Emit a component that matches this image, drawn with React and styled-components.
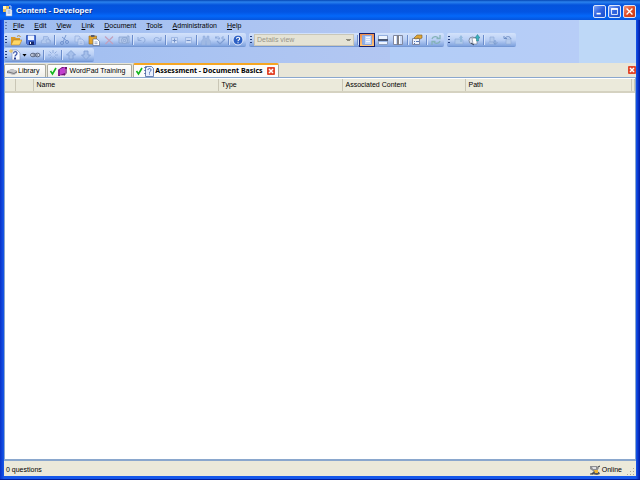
import React from 'react'
import styled, { createGlobalStyle, css } from 'styled-components'

const menus = ['File', 'Edit', 'View', 'Link', 'Document', 'Tools', 'Administration', 'Help']

export default function App() {
  return (
    <>
      <GlobalStyle />
      <Window>
        <TitleBar>
          <TitleIcon />
          <Title>Content - Developer</Title>
          <Caption aria-label="Minimize">
            <svg viewBox="0 0 13 13">
              <path d="M3 8h5v2H3z" fill="#fff" />
            </svg>
          </Caption>
          <Caption aria-label="Maximize">
            <svg viewBox="0 0 13 13">
              <path d="M3 3.5h7v6.5H3z" fill="none" stroke="#fff" />
              <path d="M2.5 2.5h8v2h-8z" fill="#fff" />
            </svg>
          </Caption>
          <Caption $close aria-label="Close">
            <svg viewBox="0 0 13 13">
              <path d="M3 3l7 7M10 3l-7 7" stroke="#fff" strokeWidth="1.6" />
            </svg>
          </Caption>
        </TitleBar>
        <Docks>
          <MenuBar>
            <Grip />
            {menus.map((name) => (
              <MenuItem key={name}>
                <u>{name[0]}</u>
                {name.slice(1)}
              </MenuItem>
            ))}
          </MenuBar>
          <ToolRow>
            <Band>
              <Grip $dark />
              <Tool icon="open" label="Open" />
              <Tool icon="save" label="Save" />
              <Tool icon="print" label="Print" disabled />
              <Divider />
              <Tool icon="cut" label="Cut" disabled />
              <Tool icon="copy" label="Copy" disabled />
              <Tool icon="paste" label="Paste" />
              <Tool icon="remove" label="Delete" disabled />
              <Tool icon="camera" label="Record" disabled />
              <Divider />
              <Tool icon="undo" label="Undo" disabled />
              <Tool icon="redo" label="Redo" disabled />
              <Divider />
              <Tool icon="plus" label="Expand" disabled narrow />
              <Tool icon="minus" label="Collapse" disabled narrow />
              <Divider />
              <Tool icon="find" label="Find" disabled />
              <Tool icon="spell" label="Spelling" disabled narrow />
              <Divider />
              <Tool icon="help" label="Help" />
            </Band>
            <Band>
              <Grip $dark />
              <ViewSelect aria-label="View" disabled>
                <option>Details view</option>
              </ViewSelect>
              <Divider $roomy />
              <Tool icon="single" label="Single pane" active />
              <Tool icon="rows" label="Split horizontally" />
              <Tool icon="columns" label="Split vertically" />
              <Divider $roomy />
              <Tool icon="properties" label="Properties" />
              <Divider $roomy />
              <Tool icon="refresh" label="Refresh" disabled />
            </Band>
            <Band>
              <Grip $dark />
              <Tool icon="checkIn" label="Check in" disabled />
              <Tool icon="checkInAll" label="Check in all" />
              <Divider $roomy />
              <Tool icon="checkOut" label="Check out" disabled />
              <Tool icon="undoCheckOut" label="Undo check out" disabled />
            </Band>
          </ToolRow>
          <ToolRow>
            <Band>
              <Grip $dark />
              <Tool icon="question" label="New question" narrow />
              <DropButton aria-label="Question types" />
              <Tool icon="link" label="Link" />
              <Divider />
              <Tool icon="burst" label="Unlink" disabled />
              <Divider />
              <Tool icon="up" label="Move up" disabled />
              <Tool icon="down" label="Move down" disabled />
            </Band>
          </ToolRow>
        </Docks>
        <TabStrip>
          <Tab>
            <Icon name="library" />
            <TabLabel>Library</TabLabel>
          </Tab>
          <Tab>
            <Icon name="check" small />
            <Icon name="book" />
            <TabLabel>WordPad Training</TabLabel>
          </Tab>
          <Tab as="div" $active>
            <Icon name="check" small />
            <Icon name="page" />
            <TabLabel>Assessment - Document Basics</TabLabel>
            <CloseButton label="Close Assessment" />
          </Tab>
          <Filler />
          <CloseButton label="Close tab" />
        </TabStrip>
        <ListPane>
          <ListTable>
            <thead>
              <tr>
                <Heading $width={10} aria-label="State" />
                <Heading $width={18} aria-label="Kind" />
                <Heading $width={185}>Name</Heading>
                <Heading $width={124}>Type</Heading>
                <Heading $width={123}>Associated Content</Heading>
                <Heading>Path</Heading>
                <Heading $width={3} aria-label="More" />
              </tr>
            </thead>
          </ListTable>
        </ListPane>
        <StatusBar>
          <span>0 questions</span>
          <Online>
            <Icon name="online" />
            Online
            <SizeGrip viewBox="0 0 9 9" aria-hidden="true">
              <path
                d="M7 1h1v1H7zM4 4h1v1H4zM7 4h1v1H7zM1 7h1v1H1zM4 7h1v1H4zM7 7h1v1H7z"
                fill="#a9a798"
              />
            </SizeGrip>
          </Online>
        </StatusBar>
      </Window>
    </>
  )
}

function Tool({ icon, label, disabled, active, narrow }) {
  return (
    <ToolButton aria-label={label} disabled={disabled} $active={active} $narrow={narrow}>
      <Icon name={icon} />
    </ToolButton>
  )
}

function CloseButton({ label }) {
  return (
    <CloseBox aria-label={label}>
      <svg viewBox="0 0 8 8">
        <path d="M2 2l4 4M6 2L2 6" stroke="#fff" strokeWidth="1.5" />
      </svg>
    </CloseBox>
  )
}

function TitleIcon() {
  return (
    <Glyph viewBox="0 0 12 12" aria-hidden="true">
      <path d="M1 1h6v6H1z" fill="#f0c24c" />
      <path d="M1 1h3v3H1z" fill="#fff3b8" />
      <path d="M4 4h5l1 1v6H4z" fill="#eef3fb" stroke="#8aa0c8" strokeWidth=".5" />
      <path d="M5.5 6h3M5.5 8h3" stroke="#7f9fd8" />
      <path d="M7 1h2v3" fill="none" stroke="#bcd4f8" />
    </Glyph>
  )
}

function Icon({ name, small }) {
  return (
    <Glyph viewBox={small ? '0 0 8 12' : '0 0 12 12'} $small={small} aria-hidden="true">
      {icons[name]}
    </Glyph>
  )
}

const dim = '#90acdc'

const icons = {
  open: (
    <>
      <path d="M1 3h4l1 1h4v2H4l-2 5H1z" fill="#d99a2b" />
      <path d="M3.5 6H12l-2.5 5H1z" fill="#ffd765" stroke="#a8701c" strokeWidth=".5" />
      <path d="M7 2.5c1.5-1.5 3-.8 3.5.5" fill="none" stroke="#b98a3a" />
    </>
  ),
  save: (
    <>
      <path d="M1.5 1.5h9v9h-8l-1-1z" fill="#4d75dc" stroke="#3a5cb8" />
      <path d="M3 1.5h6V6H3z" fill="#edf3ff" />
      <path d="M4 7.5h5V11H4z" fill="#18286a" />
      <path d="M5 8h1v2H5z" fill="#fff" />
    </>
  ),
  print: (
    <>
      <path d="M1.5 9.5v-3l2-1v-3h4l1 1v2l2 1v3z" fill="#b1c8ee" stroke={dim} strokeWidth=".7" />
      <circle cx="8" cy="7" r="2" fill="none" stroke={dim} strokeWidth=".7" />
    </>
  ),
  cut: (
    <>
      <path d="M8 1L5 8M4 3l5 4" stroke="#7899d2" />
      <circle cx="4" cy="9" r="1.5" fill="none" stroke="#6f91cd" />
      <circle cx="9" cy="8" r="1.5" fill="none" stroke="#6f91cd" />
    </>
  ),
  copy: (
    <g fill="#c3d5f4" stroke={dim} strokeWidth=".7">
      <path d="M2 2h4l1 1v5H2z" />
      <path d="M5 5h4l2 2v4H5z" />
      <path d="M6.5 8h3M6.5 9.5h3" />
    </g>
  ),
  paste: (
    <>
      <path d="M1 2h7.5v8H1z" fill="#e0a32e" stroke="#8a6422" strokeWidth=".6" />
      <path d="M3 1h3.5v2H3z" fill="#555b70" />
      <path d="M5 5h4l2.5 2.5v4H5z" fill="#fff" stroke="#56627e" strokeWidth=".6" />
      <path d="M6.5 8h3M6.5 9.7h3" stroke="#6682b5" strokeWidth=".7" />
    </>
  ),
  remove: <path d="M2 2.5l8 7.5M10 2.5L2.5 10" stroke="#c3a0bd" strokeWidth="1.2" />,
  camera: (
    <g fill="#b4c9ec" stroke="#7f9bca" strokeWidth=".7">
      <path d="M1 3h8v6H1zM9 2h2v7H9" />
      <circle cx="6.5" cy="6.5" r="3" />
      <circle cx="6.5" cy="6.5" r="1.2" />
    </g>
  ),
  undo: <path d="M2 3v3.5h3.5M2.5 6C5 2.5 9 3 9 6c0 1.5-1 2.5-2 3" fill="none" stroke={dim} />,
  redo: <path d="M10 3v3.5H6.5M9.5 6C7 2.5 3 3 3 6c0 1.5 1 2.5 2 3" fill="none" stroke={dim} />,
  plus: (
    <>
      <path d="M3.5 3.5h6v6h-6z" fill="#cadaf6" stroke={dim} strokeWidth=".7" />
      <path d="M4.5 6.5h4M6.5 4.5v4" stroke="#7391c8" />
    </>
  ),
  minus: (
    <>
      <path d="M3.5 3.5h6v6h-6z" fill="#cadaf6" stroke={dim} strokeWidth=".7" />
      <path d="M4.5 6.5h4" stroke="#7391c8" />
    </>
  ),
  find: (
    <path
      d="M3 2h2v2h2V2h2v3l1.5 2v4h-4V7h-1v4h-4V7L3 5z"
      fill="#a0b9e3"
      stroke={dim}
      strokeWidth=".5"
    />
  ),
  spell: (
    <>
      <path d="M1 3.5h2M4 2v3h1.5V3.5M10 3H8v2h2M2 2v3" fill="none" stroke={dim} />
      <path d="M3 7l3 3 5-5" fill="none" stroke="#7f9ed3" strokeWidth="1.2" />
    </>
  ),
  help: (
    <>
      <circle cx="6" cy="6" r="5" fill="#2c5fc4" stroke="#e6eeff" />
      <path
        d="M4.5 4.7c0-2 3.2-2 3.2 0C7.7 6 6 5.8 6 7.2M6 8.3v1"
        fill="none"
        stroke="#fff"
        strokeWidth="1.1"
      />
    </>
  ),
  single: (
    <>
      <path d="M1.5 1.5h9v9h-9z" fill="#c5d8fa" stroke="#8ba6df" />
      <path d="M2 2h2v8H2z" fill="#8eafe8" />
      <path d="M5 3.5h4M5 5.5h4M5 7.5h4" stroke="#f2f7ff" />
    </>
  ),
  rows: (
    <>
      <path d="M1.5 1.5h9v9h-9z" fill="#edf4ff" stroke="#8d9dbd" />
      <path d="M1 1h10v1H1z" fill="#94afe0" />
      <path d="M1 5h10v2H1z" fill="#4a5876" />
      <path d="M2 7h8v1H2z" fill="#9fbced" />
    </>
  ),
  columns: (
    <>
      <path d="M1.5 1.5h9v9h-9z" fill="#c9dafa" stroke="#8088a0" />
      <path d="M2 2h2v8H2zM7 2h1v8H7z" fill="#fff" />
      <path d="M5 1h2v10H5z" fill="#7e8088" />
    </>
  ),
  properties: (
    <>
      <path d="M1.5 4.5h7v6h-7z" fill="#eef2fa" stroke="#7d86a0" />
      <path d="M3 7h1v1H3zM5 7h3v1H5zM3 9h1v1H3z" fill="#5577b8" />
      <path d="M3 4l3-3h5v3L9 5 7 4 5 5z" fill="#e0a536" stroke="#7b5c26" strokeWidth=".6" />
    </>
  ),
  refresh: (
    <path
      d="M2 5c1-3 5-3 6-1M10 1v3.5H6.5M10 7c-1 3-5 3-6 1M2 11V7.5h3.5"
      fill="none"
      stroke="#85b3b8"
      strokeWidth="1.3"
    />
  ),
  checkIn: (
    <>
      <path d="M2 5h6l2 1v4H2z" fill="#b0c9ec" stroke="#8eacd9" strokeWidth=".6" />
      <path d="M6 4l2-3 2 3H9v4H7V4z" fill="#94bade" />
    </>
  ),
  checkInAll: (
    <>
      <circle cx="4.5" cy="6.5" r="3.5" fill="#dce4f1" stroke="#6c7891" strokeWidth=".8" />
      <path d="M4 4h4l1 1v5H5z" fill="#fff" stroke="#68758f" strokeWidth=".6" />
      <path d="M3 9l3 2" stroke="#39445b" />
      <path d="M7 4l2.5-3.5L12 4h-1.5v3h-2V4z" fill="#38b2bd" stroke="#287889" strokeWidth=".5" />
    </>
  ),
  checkOut: (
    <>
      <path d="M2 8h8v2H2zM3 3h4v5H3z" fill="#b4caed" stroke="#8eaad6" strokeWidth=".6" />
      <path d="M8 6v4M6.5 8.5L8 10.5l2-2" fill="none" stroke="#7799ce" />
    </>
  ),
  undoCheckOut: (
    <>
      <path d="M4 5h5v5H4z" fill="#b4caed" stroke="#90abd6" strokeWidth=".6" />
      <path d="M2 2v2.5h3M3 4c2-2 5-2 6 1" fill="none" stroke="#6e8ec4" />
    </>
  ),
  question: (
    <>
      <path d="M3 1h5l3 3v7H3z" fill="#f6f9ff" stroke="#8797b8" strokeWidth=".7" />
      <path d="M4.5 4.5C4.5 2 8 2 8 4.3 8 6 6 6 6 7.5" fill="none" stroke="#3a53a8" strokeWidth="1.2" />
      <path d="M5 8.5h2v2H5z" fill="#293f91" />
      <path d="M2 0v4M0 2h4" stroke="#f2c348" />
    </>
  ),
  link: (
    <g fill="#d5dceb" stroke="#5b6780">
      <ellipse cx="4" cy="6" rx="2.5" ry="1.8" />
      <ellipse cx="8.5" cy="6" rx="2.5" ry="1.8" />
      <path d="M3.5 6H9" />
    </g>
  ),
  burst: (
    <path
      d="M6 1v3M6 8v3M1 6h3M8 6h3M2.5 2.5l2 2M7.5 7.5l2 2M9.5 2.5l-2 2M4.5 7.5l-2 2"
      stroke={dim}
    />
  ),
  up: <path d="M6 1.5L10.5 6H8v4H4V6H1.5z" fill="#a6c0eb" stroke="#7d9dd3" strokeWidth=".8" />,
  down: <path d="M6 10.5L1.5 6H4V2h4v4h2.5z" fill="#a6c0eb" stroke="#7d9dd3" strokeWidth=".8" />,
  check: <path d="M1.5 6l2 3L7 3" fill="none" stroke="#12b51c" strokeWidth="1.6" />,
  library: (
    <>
      <path d="M1 6l5-2 5 2v2L8 10 1 8z" fill="#77787b" />
      <path d="M1 6l5-2 5 2-3 2z" fill="#c6c7ca" />
      <path d="M2 8l6 1.5L11 8" fill="none" stroke="#eee" strokeWidth=".7" />
    </>
  ),
  book: (
    <>
      <path d="M1 5l4-3h5v6l-3 3H1z" fill="#6c1471" />
      <path d="M3 4l5-2v6l-5 2z" fill="#c23fce" />
      <path d="M1 5l2-1v6l-2 1z" fill="#8d2196" />
      <path d="M9 4v5M3 10.5h4" stroke="#e8c8ea" strokeWidth=".8" />
    </>
  ),
  page: (
    <>
      <path d="M2.5 1.5h6l2 2v8h-8z" fill="#e9f0ff" stroke="#46639f" strokeWidth=".8" />
      <path d="M1 2.5h3M1 5.5h2M1 8.5h2" stroke="#46639f" strokeWidth=".7" />
      <path d="M5 5c0-2 3-2 3 0 0 1.5-1.5 1.2-1.5 2.7M6.5 8.5v1" fill="none" stroke="#3e5fac" />
    </>
  ),
  online: (
    <>
      <path d="M1 2h7l2 2-2 3H4L1 5z" fill="#8e8f92" />
      <path d="M3 3h4v2H4z" fill="#dfe1e4" />
      <path d="M2 10l3-3 5 1 1 2-3 1z" fill="#50545b" />
      <path d="M5 6h4v3H6z" fill="#efb635" />
      <path d="M9 3l2-1M1 10h3" stroke="#34383d" />
    </>
  ),
}

const GlobalStyle = createGlobalStyle`
  * {
    box-sizing: border-box;
  }

  body {
    margin: 0;
    font: 7px/10px 'Liberation Sans', Arial, sans-serif;
    color: #000;
  }

  button,
  select {
    margin: 0;
    padding: 0;
    border: 0;
    background: none;
    font: inherit;
    color: inherit;
  }
`

const Window = styled.main`
  display: flex;
  flex-direction: column;
  min-height: 100vh;
  padding: 0 4px 3px;
  background: linear-gradient(
    90deg,
    #0831c8,
    #1658ea 4px,
    #1658ea calc(100% - 4px),
    #0a35cc calc(100% - 2px),
    #001da0
  );
  border-bottom: 1px solid #001d9b;
`

const TitleBar = styled.header`
  display: flex;
  align-items: center;
  gap: 2px;
  height: 20px;
  margin: 0 -4px;
  padding: 2px 4px 0 2px;
  background: linear-gradient(#0546b4, #2b82ee 2px, #0453dc 5px, #0355e3 12px, #0468fa 16px, #0554dc);
`

const Title = styled.h1`
  flex: 1;
  margin: 0;
  color: #fff;
  font: bold 8px/12px 'Liberation Sans', Arial, sans-serif;
  text-shadow: 1px 1px #0b3794;
`

const Caption = styled.button`
  width: 13px;
  height: 13px;
  border: 1px solid #dce6fb;
  border-radius: 2px;
  background: ${({ $close }) =>
    $close
      ? 'linear-gradient(135deg, #f0957c, #df4c25 50%, #c73a12)'
      : 'linear-gradient(135deg, #7fa3f5, #2e62e0 50%, #1d4ecb)'};

  svg {
    display: block;
  }
`

const Docks = styled.div`
  padding-bottom: 1px;
  background: linear-gradient(90deg, #9fbdf0, #a9c3f2 30%, #b3c7f2 61%, #b2cdf7 61%, #b7cdf7 91%, #bed8f7 91%);
`

const MenuBar = styled.nav`
  display: flex;
  align-items: center;
  height: 12px;
`

const MenuItem = styled.button`
  padding: 0 5px;
  white-space: nowrap;

  u {
    text-underline-offset: 1px;
  }
`

const ToolRow = styled.div`
  display: flex;
  gap: 3px;
  margin-top: 1px;
`

const Band = styled.div`
  display: flex;
  align-items: center;
  height: 14px;
  padding-right: 1px;
  border-radius: 2px;
  background: linear-gradient(#d3e2fb, #b9cff5 50%, #84a6e0 90%, #6b8fce);
`

const Grip = styled.span`
  width: 2px;
  height: 9px;
  margin: 0 1px;
  background: repeating-linear-gradient(
    ${({ $dark }) => ($dark ? '#27417f' : '#6078b0')} 0 1px,
    transparent 1px 3px
  );
`

const Divider = styled.span`
  width: 1px;
  height: 10px;
  margin: 0 1px 0 ${({ $roomy }) => ($roomy ? '2px' : '1px')};
  background: #6a8ccb;
  box-shadow: 1px 0 #d7e4fb;
`

const ToolButton = styled.button`
  display: flex;
  align-items: center;
  justify-content: center;
  width: ${({ $narrow }) => ($narrow ? '14px' : '15px')};
  height: 14px;

  ${({ $active }) =>
    $active &&
    css`
      width: 16px;
      border: 1px solid #15206f;
      background: linear-gradient(#f08d4c, #ffc677);
    `}
`

const DropButton = styled.button`
  width: 5px;
  height: 3px;
  background: #000;
  clip-path: polygon(0 0, 100% 0, 50% 100%);
`

const ViewSelect = styled.select`
  appearance: none;
  width: 100px;
  height: 12px;
  margin: 0 1px;
  padding: 0 2px;
  border: 1px solid #c9c7b9;
  background:
    linear-gradient(to bottom left, #8d8b7e 50%, transparent 50%) 91px 4px / 3px 3px no-repeat,
    linear-gradient(to bottom right, #8d8b7e 50%, transparent 50%) 94px 4px / 3px 3px no-repeat,
    #e5e3d5;

  &:disabled {
    color: #98968a;
    opacity: 1;
  }
`

const Glyph = styled.svg`
  flex: none;
  width: ${({ $small }) => ($small ? '8px' : '12px')};
  height: 12px;
`

const TabStrip = styled.nav`
  display: flex;
  align-items: flex-end;
  gap: 1px;
  height: 14px;
  background: #e8e6d8;
`

const Tab = styled.button`
  display: flex;
  align-items: center;
  height: 13px;
  padding: 0 2px 0 1px;
  border: 1px solid #aaa99d;
  border-width: 1px 1px 0;
  border-radius: 2px 2px 0 0;
  background: linear-gradient(#fff, #f0efe8);
  white-space: nowrap;

  ${({ $active }) =>
    $active &&
    css`
      height: 14px;
      padding-right: 3px;
      border-top: 2px solid #f5a623;
      background: #fcfcfa;
      font-family: 'Noto Sans', sans-serif;
      font-weight: bold;
    `}
`

const TabLabel = styled.span`
  padding-right: 4px;
`

const Filler = styled.span`
  flex: 1;
`

const CloseBox = styled.button`
  align-self: center;
  width: 8px;
  height: 8px;
  border-radius: 1px;
  background: #e2462a;

  svg {
    display: block;
    width: 8px;
    height: 8px;
  }
`

const ListPane = styled.section`
  flex: 1;
  padding-top: 1px;
  border: 1px solid #8aa7cd;
  border-width: 1px 1px 2px;
  background: #fff;
`

const ListTable = styled.table`
  width: 100%;
  border-collapse: collapse;
  table-layout: fixed;
  background: #ebeadb;
`

const Heading = styled.th`
  width: ${({ $width }) => ($width ? `${$width}px` : 'auto')};
  height: 13px;
  padding: 0 ${({ $width }) => ($width < 10 ? '0' : '3px')};
  border-right: 1px solid #c9c6b5;
  border-bottom: 2px solid #d5d2c1;
  font-weight: normal;
  text-align: left;
  white-space: nowrap;
`

const StatusBar = styled.footer`
  display: flex;
  align-items: center;
  justify-content: space-between;
  height: 15px;
  padding: 2px 1px 0 2px;
  background: #ebe9da;
`

const Online = styled.span`
  display: flex;
  align-items: center;
  gap: 1px;
`

const SizeGrip = styled.svg`
  align-self: flex-end;
  width: 9px;
  height: 9px;
  margin-left: 3px;
`
